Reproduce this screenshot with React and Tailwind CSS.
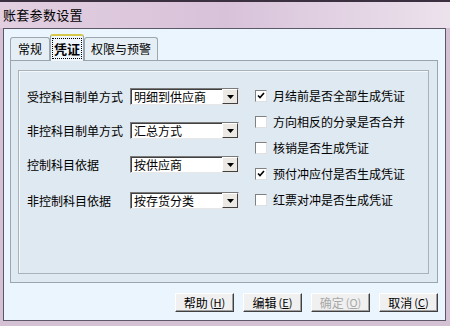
import React from "react";

const font = "font-['SimSun','Noto_Sans_CJK_SC',sans-serif]";

const Combo = ({ value }) => (
  <div className="w-[109px] h-[17px] flex bg-white border border-t-[#7a7a7a] border-l-[#7a7a7a] border-b-[#e8e8e8] border-r-[#e8e8e8]">
    <div className="flex-1 flex items-center pl-[2px] text-[12px] leading-none text-black border-t border-l border-t-[#404040] border-l-[#404040]">
      {value}
    </div>
    <div className="w-[16px] flex items-center justify-center bg-[#ece9e4] border border-t-white border-l-white border-b-[#404040] border-r-[#404040]">
      <svg width="7" height="4" viewBox="0 0 7 4">
        <path d="M0 0h7L3.5 4z" fill="#000" />
      </svg>
    </div>
  </div>
);

const Check = ({ checked, label }) => (
  <div className="flex items-center h-[13px] mt-[13px] first:mt-0">
    <div className="w-[12px] h-[12px] bg-white border border-t-[#808080] border-l-[#808080] border-b-[#e0e0e0] border-r-[#e0e0e0] flex items-center justify-center">
      {checked && (
        <svg width="8" height="8" viewBox="0 0 8 8">
          <path d="M1 3.5l2 2 4-4.5" stroke="#000" strokeWidth="1.6" fill="none" />
        </svg>
      )}
    </div>
    <span className="ml-[6px] text-[12px] leading-none text-black whitespace-nowrap">{label}</span>
  </div>
);

const Btn = ({ text, hot, disabled }) => (
  <button
    className={`w-[59px] h-[19px] flex items-center justify-center text-[12px] leading-none bg-[#f0f0f0] border border-t-white border-l-white border-b-[#404040] border-r-[#404040] shadow-[inset_-1px_-1px_0_#a0a0a0] ${
      disabled ? "text-[#a8a8a8]" : "text-black"
    }`}
  >
    {text}
    <span className="ml-[2px] text-[11px]">
      (<span className="underline">{hot}</span>)
    </span>
  </button>
);

export default function App() {
  return (
    <div className={`w-[450px] h-[326px] flex flex-col bg-[#d4c2d4] ${font}`}>
      {/* title bar */}
      <div className="h-[28px] flex items-center pl-[3px] border-t-2 border-[#3a3040] bg-gradient-to-r from-[#e2cfe0] via-[#d8c2da] to-[#ece2ec]">
        <span className="text-[13px] text-black tracking-[0.3px]">账套参数设置</span>
      </div>

      {/* client area */}
      <div className="ml-[3px] mr-[4px] h-[293px] flex flex-col bg-[#ebf5fd] border border-[#5c5868]">
        {/* tabs */}
        <div className="flex items-end h-[31px] pl-[6px]">
          <div className="h-[23px] px-[7px] flex items-center text-[12px] border border-b-0 border-[#9ca6ae] rounded-t-[3px] bg-[#e6eef5]">
            常规
          </div>
          <div className="h-[27px] -mb-[1px] px-[2px] flex items-center bg-[#eef5fb] border border-b-0 border-[#9ca6ae] border-t-2 border-t-[#d6c84a] rounded-t-[3px] relative z-10">
            <span className="font-bold text-[13px] px-[1px] outline-1 outline-dotted outline-black">凭证</span>
          </div>
          <div className="h-[23px] px-[6px] flex items-center text-[12px] border border-b-0 border-[#9ca6ae] rounded-t-[3px] bg-[#e6eef5]">
            权限与预警
          </div>
        </div>

        {/* tab panel */}
        <div className="ml-[6px] mr-[7px] h-[223px] bg-[#dfe9f1] border border-[#9aa5ae] pt-[9px] pl-[7px] pr-[8px]">
          <div className="h-[204px] border border-[#a8b2ba] shadow-[inset_1px_1px_0_#f4f8fb] flex">
            {/* left column */}
            <div className="w-[224px] pl-[8px] pt-[17px]">
              {[
                ["受控科目制单方式", "明细到供应商", "mt-0"],
                ["非控科目制单方式", "汇总方式", "mt-[17px]"],
                ["控制科目依据", "按供应商", "mt-[17px]"],
                ["非控制科目依据", "按存货分类", "mt-[19px]"],
              ].map(([label, value, mt]) => (
                <div key={label} className={`flex items-center h-[17px] ${mt}`}>
                  <span className="w-[103px] text-[12px] leading-none text-black whitespace-nowrap">{label}</span>
                  <Combo value={value} />
                </div>
              ))}
            </div>
            {/* right column */}
            <div className="pl-[12px] pt-[18px]">
              <Check checked label="月结前是否全部生成凭证" />
              <Check label="方向相反的分录是否合并" />
              <Check label="核销是否生成凭证" />
              <Check checked label="预付冲应付是否生成凭证" />
              <Check label="红票对冲是否生成凭证" />
            </div>
          </div>
        </div>

        {/* buttons */}
        <div className="flex justify-end gap-[9px] mr-[7px] mt-[10px]">
          <Btn text="帮助" hot="H" />
          <Btn text="编辑" hot="E" />
          <Btn text="确定" hot="O" disabled />
          <Btn text="取消" hot="C" />
        </div>
      </div>
    </div>
  );
}
